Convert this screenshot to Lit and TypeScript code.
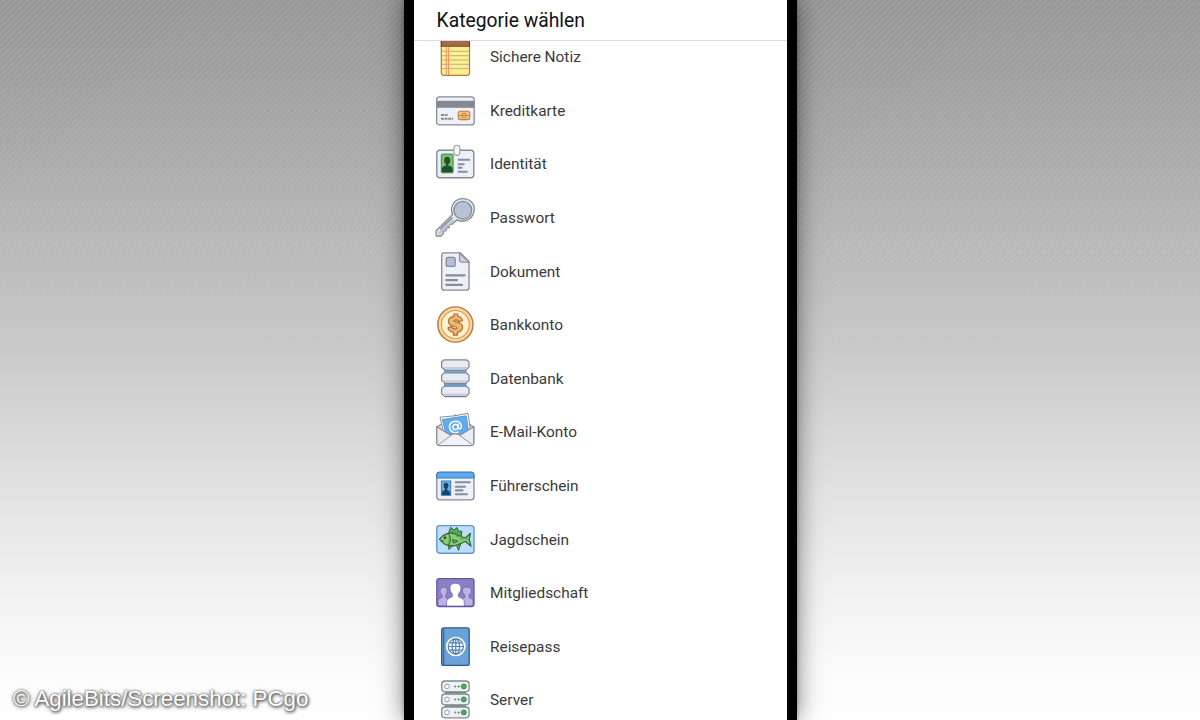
import { LitElement, html, svg, css } from "lit";
import { customElement, property } from "lit/decorators.js";

const G = "#878b94";
const L = "#edf0f6";

const icons: Record<string, unknown> = {
  note: svg`
    <rect x="6.3" y="-1" width="28.2" height="39.3" rx="2.5" fill="#fdee90" stroke="#b5783f" stroke-width="1.2"/>
    <path d="M7 14.3H34M7 18.7H34M7 23H34M7 27.3H34M7 31.6H34" stroke="#b7b489" stroke-width="1"/>
    <path d="M11.3 10V38M13.6 10V38" stroke="#f0946c" stroke-width="1.1"/>
    <path d="M6.3 0H34.5V9.2H6.3Z" fill="#a66a44" stroke="#74452c" stroke-width="1.1"/>`,
  card: svg`
    <rect x="1.6" y="5.9" width="37.6" height="28" rx="3" fill="${L}" stroke="${G}" stroke-width="1.3"/>
    <rect x="1.6" y="9.8" width="37.6" height="7" fill="#85898f"/>
    <path d="M6 24H13M6 27.7H18" stroke="${G}" stroke-width="1.9" stroke-dasharray="3 .6"/>
    <rect x="23.3" y="20.2" width="11.4" height="8.4" rx="2" fill="#fbc987" stroke="#bd7c3e" stroke-width="1.1"/>
    <path d="M24 24.5H34M27 22.5V26.7M31 22.5V26.7M27 22.5H31M27 26.7H31" fill="none" stroke="#bd7c3e" stroke-width=".9"/>`,
  identity: svg`
    <rect x="1.8" y="6.2" width="37" height="27.6" rx="3.2" fill="${L}" stroke="${G}" stroke-width="1.4"/>
    <rect x="6.3" y="10.1" width="11.8" height="18.7" rx="1" fill="#78c278" stroke="#438747" stroke-width="1"/>
    <ellipse cx="12.2" cy="16.5" rx="3" ry="3.8" fill="#244f2b"/>
    <path d="M11 19H13.4V21.5C16 22.2 17.7 23 17.7 25.5V28.3H6.8V25.5C6.8 23 8.5 22.2 11 21.5Z" fill="#244f2b"/>
    <path d="M22.8 15.7H35M22.8 20.2H29.5M22.8 23.8H27.5M22.8 27.7H32.5" stroke="#878da0" stroke-width="2"/>
    <rect x="19" y="1.2" width="5.8" height="10.2" rx="2.9" fill="#f8f8fa" stroke="#9b9ea5" stroke-width="1.1"/>`,
  key: svg`
    <path d="M17.6 16.5L1.2 32.8V38H6L8.3 35.5V32.8H11.2V30L14.2 29.5V26.6L17.3 26.2L22 21.8C25 23.8 30.5 23.8 34 21.3C40 16.6 41 8.4 36.5 4C31.5-.8 23-.4 19 4.6C16.2 8 15.6 13 17.6 16.5Z" fill="#e4e7ee" stroke="${G}" stroke-width="1.3" stroke-linejoin="round"/>
    <circle cx="27.8" cy="12.3" r="8.9" fill="#b9c1d5" stroke="${G}" stroke-width="1.3"/>
    <path d="M3.8 35.6L18.5 22.2" stroke="#b9c0d0" stroke-width="2.2"/>
    <path d="M5.2 31.2L17.5 19.5" stroke="#858b9d" stroke-width="1.5"/>`,
  doc: svg`
    <path d="M9.3 .8H25.3L34 9.5V35.5Q34 38.2 31.3 38.2H9.3Q6.7 38.2 6.7 35.5V3.5Q6.7 .8 9.3 .8Z" fill="${L}" stroke="${G}" stroke-width="1.3"/>
    <path d="M24.5 1V7.8Q24.5 10.2 27 10.2H34Z" fill="#cbd0dc" stroke="${G}" stroke-width="1.1"/>
    <rect x="11.2" y="5.4" width="9" height="9" rx="2" fill="#b5bfd7" stroke="${G}" stroke-width="1.3"/>
    <path d="M11.3 23.3H29.5M11.3 28.1H22M11.3 32.8H27" stroke="#858b99" stroke-width="2.2" stroke-linecap="round"/>`,
  coin: svg`
    <circle cx="20.4" cy="19.5" r="17.6" fill="#fad499" stroke="#b57d45" stroke-width="1.4"/>
    <circle cx="20.4" cy="19.5" r="14" fill="#fff0cd" stroke="#cf9a62" stroke-width="1.1"/>
    <path transform="translate(20.4 19.5) scale(1.08) translate(-20.4 -19.7)" d="M19 10V12.2C15.8 12.8 13.9 14.5 14 17.2C14.2 20 16.2 21 19.8 21.8C22.3 22.3 22.3 23.6 20.3 23.8C18.4 24 17.2 22.8 17 21.7L13.5 22.8C14 25 15.8 26.5 18.5 27V29.5H22.3V27C25.5 26.2 27.3 24.5 27 21.7C26.8 19 24.8 18.1 21.6 17.4C18.8 16.8 18.5 15.9 20.3 15.5C22 15.2 23.2 16 23.7 17.2L27 16C26.5 14 25 12.6 22.5 12.1V10Z" fill="#f0b56f" stroke="#a96f38" stroke-width="1.1" stroke-linejoin="round"/>`,
  database: svg`
    <path d="M9 10H31.5V29H9Z" fill="#6aa9e5"/>
    <path d="M9.5 11.5H31M9.5 24.7H31" stroke="#3977ae" stroke-width="1.1"/>
    ${[0.8, 14, 27.2].map(
      (y) => svg`<path transform="translate(0 ${y})" d="M9.2 0H31.5L34 2.2V7.4L31 10.4H9.8L6.6 7.4V2.2Z" fill="#e8ebf2" stroke="#7f8590" stroke-width="1.2" stroke-linejoin="round"/>
      <path transform="translate(0 ${y})" d="M7.4 7.2L10.2 9.8H30.5L33.3 7.2Z" fill="#c8cdd9"/>`
    )}`,
  mail: svg`
    <path d="M1.8 15L20.5 3L38.8 15V31H1.8Z" fill="#dce0e8" stroke="${G}" stroke-width="1.1"/>
    <path d="M5 5.2L20 3.8L33 1.2L36 22L20 29L9 22Z" fill="#fff" stroke="#858c98" stroke-width="1"/>
    <path d="M7.3 7.5L31.2 3.8L33.7 20L20 26L10.5 20Z" fill="#61aaf0" stroke="#4689cd" stroke-width=".8"/>
    <g fill="none" stroke="#fff" stroke-width="1.5" transform="rotate(-8 20.5 15)">
      <circle cx="20.5" cy="15" r="2.6"/>
      <path d="M23.2 12V16C23.4 18.7 26.7 17.5 26.3 14C25.8 10.5 22.8 9 19.8 9.3C16.5 9.7 14.4 12.2 14.6 15.5C14.9 19.4 18.6 21.7 22.8 20.2"/>
    </g>
    <path d="M1.8 14.8L15.5 23Q20.4 19.8 25.2 23L38.8 14.8V30.5Q38.8 33.7 35.8 33.7H4.8Q1.8 33.7 1.8 30.5Z" fill="#e9ecf2" stroke="${G}" stroke-width="1.2"/>
    <path d="M3 33L17 22.8Q20.4 20.8 23.8 22.8L37.7 33" fill="#eff1f6" stroke="#969aa4" stroke-width="1"/>`,
  license: svg`
    <rect x="1.8" y="6.2" width="37.2" height="27.6" rx="3" fill="${L}" stroke="${G}" stroke-width="1.3"/>
    <path d="M1.8 12V9Q1.8 6.2 4.8 6.2H36Q39 6.2 39 9V12Z" fill="#5ea9f0" stroke="#3c7fc4" stroke-width="1.1"/>
    <rect x="6.4" y="15" width="9.3" height="14.3" fill="#6aaeee" stroke="#397cb9" stroke-width="1"/>
    <ellipse cx="11" cy="19.8" rx="2.4" ry="3" fill="#1c426e"/>
    <path d="M10 22H12.2V24Q15 24.6 15 27V29H7V27Q7 24.6 10 24Z" fill="#1c426e"/>
    <path d="M20.8 16.3H34.7M20.8 20.7H30M20.8 24.4H27.5M20.8 28.3H32" stroke="#888e99" stroke-width="2.1" stroke-linecap="round"/>`,
  fish: svg`
    <rect x="1.8" y="5.6" width="37.2" height="27.6" rx="2.8" fill="#bfdcfa" stroke="#5c99cf" stroke-width="1.4"/>
    <path d="M13.5 13.5L15.5 7.3L19 10L22 7.5L24 11.5L26.8 11L26.3 17Z" fill="#55a957" stroke="#35663a" stroke-width="1"/>
    <path d="M13 24L14 29.5L18.5 25ZM21.5 25L23.5 30.5L26 23Z" fill="#55a957" stroke="#35663a" stroke-width="1"/>
    <path d="M4.5 19C8 14 14.5 11.8 20.5 14.2C25 16 28.5 18 30.5 17.8L35.5 13.3L34.2 19.2L36 26.2L30.5 21.5C27 22.5 23.5 25.8 17.5 25.8C11.5 25.8 7 23.5 4.5 19Z" fill="#86cb73" stroke="#35663a" stroke-width="1.2" stroke-linejoin="round"/>
    <path d="M13.5 14C16.5 17.5 16 22.5 13 25M5.5 20.5L9 21.3M17.5 19.5L23 21.2L18.5 23Z" fill="#4a9d4d" fill-opacity=".45" stroke="#35663a" stroke-width="1"/>
    <circle cx="10" cy="17.8" r="1.2" fill="#20402a"/>
    <path d="M22 16.5H26M25 19H29M31.5 19.5H34" stroke="#4a9d4d" stroke-width="1"/>`,
  members: svg`
    <rect x="1.8" y="5.7" width="37.2" height="27.8" rx="2.5" fill="#8b80c8"/>
    <path d="M3 33V27.3Q3.3 25.3 7 24.5V22Q5 20 5 17.5Q5 14 8.7 14Q12.4 14 12.4 17.5Q12.4 20 10.8 22V24.5L15 27V33ZM38 33V27.3Q37.7 25.3 34 24.5V22Q37 20 36.7 17Q36 14 31.8 14Q27.5 14 27.3 17.5Q27.3 20 29.7 22V24.5L26 27V33Z" fill="#bbb3e2" stroke="#7060ad" stroke-width=".8"/>
    <path d="M11.5 33.3V28Q11.7 25.8 17.3 23.8V21Q14.9 18.8 14.9 15.3Q14.9 10.3 20.4 10.3Q25.9 10.3 25.9 15.3Q25.9 18.8 23.5 21V23.8Q29.1 25.8 29.3 28V33.3Z" fill="#fff" stroke="#7060ad" stroke-width=".7"/>
    <rect x="1.8" y="5.7" width="37.2" height="27.8" rx="2.5" fill="none" stroke="#66569f" stroke-width="1.3"/>`,
  passport: svg`
    <rect x="6.7" y=".8" width="27.5" height="37.6" rx="2" fill="#6ba2d8" stroke="#315b86" stroke-width="1.3"/>
    <path d="M8.7 1V38.2" stroke="#3d6e9f" stroke-width="1.3"/>
    <circle cx="20.8" cy="19.5" r="9.8" fill="#fff"/>
    <g fill="none" stroke="#4f80b2" stroke-width="1.2">
      <circle cx="20.8" cy="19.5" r="7.6"/><ellipse cx="20.8" cy="19.5" rx="3.7" ry="7.6"/>
      <path d="M20.8 12V27M13.4 19.5H28.2M14.8 15.8H26.8M14.8 23.2H26.8"/>
    </g>`,
  server: svg`
    <path d="M10 11H31V29H10Z" fill="#98b99b"/>
    <path d="M10 12.4H31M10 25.7H31" stroke="#5b8d60" stroke-width="1"/>
    ${[1, 14, 27].map(
      (y) => svg`<g transform="translate(0 ${y})">
        <rect x="6.7" y="0" width="27.4" height="10.8" rx="3.2" fill="#edf0f4" stroke="#838891" stroke-width="1.3"/>
        <circle cx="12" cy="5.4" r="2.3" fill="#fff" stroke="#999da5" stroke-width="1"/>
        <circle cx="20.3" cy="5.5" r="1" fill="#767e86"/><circle cx="23.7" cy="5.5" r="1" fill="#4d8452"/>
        <circle cx="28.8" cy="5.4" r="2.5" fill="#4cad54" stroke="#387c40" stroke-width=".8"/></g>`
    )}`,
};

@customElement("category-row")
class CategoryRow extends LitElement {
  @property() icon = "";
  @property() label = "";
  static styles = css`
    :host { display: flex; align-items: center; height: 53.6px; padding-left: 21.3px; gap: 14.7px; }
    .icon { width: 40px; height: 40px; flex: none; overflow: visible; }
    .label { font-size: 15.4px; line-height: 20px; color: #3a3a3a; white-space: nowrap; }
  `;
  render() {
    return html`<svg class="icon" viewBox="0 0 40 40" aria-hidden="true">${icons[this.icon]}</svg>
      <span class="label">${this.label}</span>`;
  }
}

@customElement("app-root")
class AppRoot extends LitElement {
  static styles = css`
    :host {
      display: grid;
      grid-template-columns: 404px 393px 1fr;
      height: 720px;
      overflow: hidden;
      font-family: Roboto, sans-serif;
      background: linear-gradient(to bottom, #9a9a9a 0, #a4a4a4 90px, #b5b5b5 210px, #c9c9c9 340px, #dddddd 460px, #f0f0f0 580px, #fcfcfc 680px, #fefefe 720px);
    }
    .side { display: flex; align-items: flex-end; position: relative; }
    .side::before {
      content: "";
      position: absolute;
      inset: 0;
      background: repeating-linear-gradient(135deg, rgba(0, 0, 0, 0.03) 0 1.5px, rgba(255, 255, 255, 0.035) 1.5px 4.24px);
      mask-image: linear-gradient(to bottom, #000, transparent 60%);
    }
    .credit {
      position: relative;
      padding: 0 0 9px 13px;
      font: 22.3px/24px "Liberation Sans", sans-serif;
      color: #fff;
      white-space: nowrap;
      text-shadow: 0 0 2px #666, 1px 1px 3px #555, 0 1px 4px #666;
    }
    .phone {
      display: flex;
      flex-direction: column;
      min-height: 0;
      position: relative;
      box-sizing: border-box;
      height: 720px;
      border: solid #000;
      border-width: 0 10px;
      background: #fff;
      box-shadow: 0 0 4px rgba(0, 0, 0, 0.3), 0 0 24px rgba(0, 0, 0, 0.5);
    }
    .head {
      flex: none;
      box-sizing: border-box;
      height: 41px;
      padding-left: 22.6px;
      border-bottom: 1px solid #d9d9d9;
      font-size: 19.3px;
      line-height: 42px;
      color: #111;
    }
    .list { flex: 1; min-height: 0; overflow: hidden; }
    .rows { margin-top: -10.6px; }
  `;
  private items = [
    ["note", "Sichere Notiz"],
    ["card", "Kreditkarte"],
    ["identity", "Identität"],
    ["key", "Passwort"],
    ["doc", "Dokument"],
    ["coin", "Bankkonto"],
    ["database", "Datenbank"],
    ["mail", "E-Mail-Konto"],
    ["license", "Führerschein"],
    ["fish", "Jagdschein"],
    ["members", "Mitgliedschaft"],
    ["passport", "Reisepass"],
    ["server", "Server"],
  ];
  render() {
    return html`
      <div class="side"><span class="credit">© AgileBits/Screenshot: PCgo</span></div>
      <main class="phone">
        <div class="head">Kategorie wählen</div>
        <div class="list"><div class="rows">
          ${this.items.map(([i, l]) => html`<category-row .icon=${i} .label=${l}></category-row>`)}
        </div></div>
      </main>
      <div class="side"></div>`;
  }
}
